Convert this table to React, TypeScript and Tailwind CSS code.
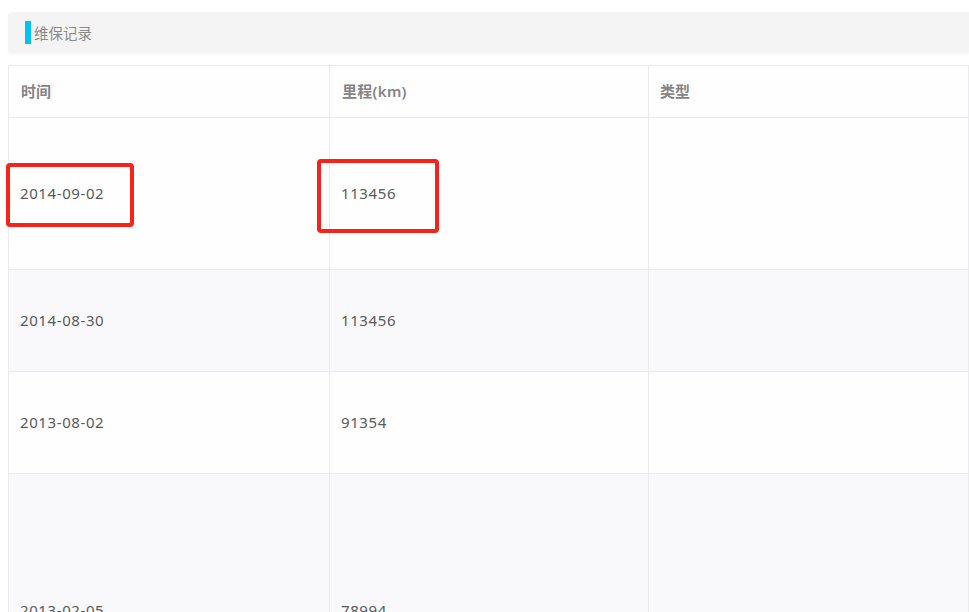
const rows = [
  { date: "2014-09-02", km: "113456", h: "h-[152px]", bg: "bg-[#fefefe]", mark: true },
  { date: "2014-08-30", km: "113456", h: "h-[102px]", bg: "bg-[#f9f9fb]", mark: false },
  { date: "2013-08-02", km: "91354", h: "h-[102px]", bg: "bg-[#fefefe]", mark: false },
  { date: "2013-02-05", km: "78994", h: "h-[274px]", bg: "bg-[#f9f9fb]", mark: false },
]

export default function App() {
  return (
    <div className="w-[969px] h-[612px] overflow-hidden bg-white font-['Noto_Sans','Noto_Sans_CJK_SC',sans-serif] pt-[12px] pl-[8px]">
      <div className="h-[41px] bg-[#f4f4f5] rounded-l-[3px] flex items-center pl-[17px] shadow-[0_2px_3px_rgba(0,0,0,0.03)]">
        <div className="w-[6px] h-[23px] bg-[#00c3f5]" />
        <span className="ml-[3px] mt-[3px] text-[14.5px] text-[#8a8a8a]">维保记录</span>
      </div>
      <table className="mt-[12px] w-[960px] border-collapse table-fixed">
        <colgroup>
          <col className="w-[321px]" />
          <col className="w-[319px]" />
          <col className="w-[320px]" />
        </colgroup>
        <thead>
          <tr className="h-[52px] bg-[#fefefe] text-[15px]">
            <th className="border border-[#ebebee] text-left font-semibold text-[#858585] pl-[12px]">时间</th>
            <th className="border border-[#ebebee] text-left font-semibold text-[#858585] pl-[12px] tracking-[0.3px]">里程(km)</th>
            <th className="border border-[#ebebee] text-left font-semibold text-[#858585] pl-[11px]">类型</th>
          </tr>
        </thead>
        <tbody>
          {rows.map((r) => (
            <tr key={r.date} className={`${r.h} ${r.bg} text-[15px] tracking-[0.6px]`}>
              <td className="border border-[#ebebee] text-[#5a5a5a] pl-[11px] relative">
                {r.date}
                {r.mark && (
                  <div className="absolute left-[-3px] top-[45px] w-[128px] h-[64px] border-[4px] border-[#f5231b] rounded-[4px]" />
                )}
              </td>
              <td className="border border-[#ebebee] text-[#5a5a5a] pl-[11px] relative">
                {r.km}
                {r.mark && (
                  <div className="absolute left-[-13px] top-[41px] w-[122px] h-[74px] border-[4px] border-[#f5231b] rounded-[4px]" />
                )}
              </td>
              <td className="border border-[#ebebee]" />
            </tr>
          ))}
        </tbody>
      </table>
    </div>
  )
}
